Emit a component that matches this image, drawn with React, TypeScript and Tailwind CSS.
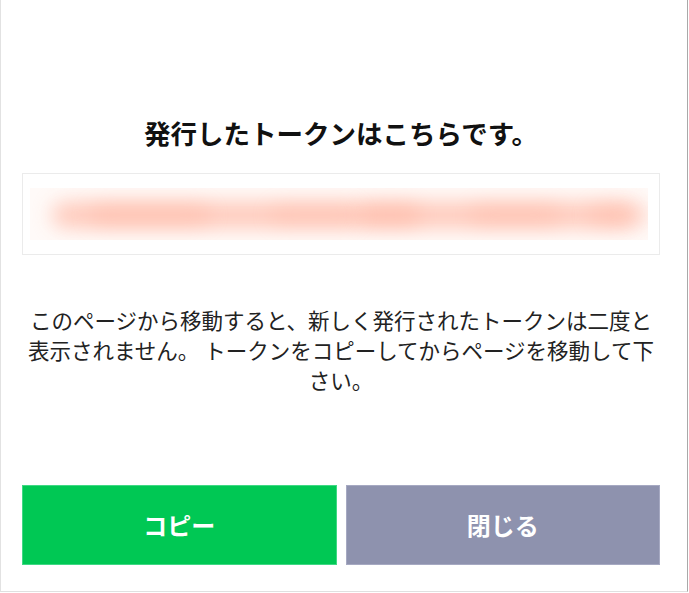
import React from "react";

const blobs = [
  { left: 60, width: 120, op: 0.35 },
  { left: 240, width: 90, op: 0.25 },
  { left: 330, width: 60, op: 0.45 },
  { left: 440, width: 90, op: 0.3 },
  { left: 560, width: 60, op: 0.35 },
];

export default function App() {
  return (
    <div className="w-[688px] h-[592px] bg-white border-l border-l-[#e2e2e2] border-r border-r-[#a9a9a9] border-b border-b-[#e0e0e0] flex flex-col pl-[21px] pr-[27px] pb-[26px] font-['Noto_Sans_CJK_JP',sans-serif]">
      <h1 className="pt-[115px] text-center text-[26.5px] leading-[36px] font-bold text-[#111]">
        発行したトークンはこちらです。
      </h1>
      <div className="mt-[22px] h-[82px] border border-[#ebebeb] pt-[14px] pb-[14px] pl-[7px] pr-[11px]">
        <div className="relative h-[52px] overflow-hidden bg-[#fffaf8]">
          <div className="absolute top-[14px] left-[22px] right-[10px] h-[26px] rounded-full bg-[#ffc4b4] blur-[10px] opacity-90" />
          {blobs.map((b, i) => (
            <div
              key={i}
              className="absolute top-[17px] h-[20px] rounded-full bg-[#ffae98] blur-[10px]"
              style={{ left: b.left, width: b.width, opacity: b.op }}
            />
          ))}
        </div>
      </div>
      <p className="mt-[50px] px-[3px] text-center text-[21.5px] leading-[30px] text-[#222]">
        このページから移動すると、新しく発行されたトークンは二度と表示されません。 トークンをコピーしてからページを移動して下さい。
      </p>
      <div className="mt-auto flex gap-[9px] h-[80px]">
        <button className="flex-1 bg-[#00c854] border border-[#3fd884] text-white text-[24px] font-bold flex items-center justify-center">
          コピー
        </button>
        <button className="flex-1 bg-[#8e92ae] border border-[#a6a9c2] text-white text-[24px] font-bold flex items-center justify-center">
          閉じる
        </button>
      </div>
    </div>
  );
}
